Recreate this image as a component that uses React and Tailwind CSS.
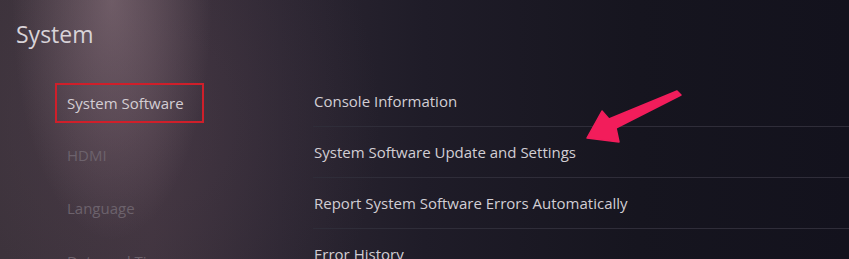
import React from "react";

const sideItems = ["HDMI", "Language", "Date and Time"];

const rows = [
  "Console Information",
  "System Software Update and Settings",
  "Report System Software Errors Automatically",
  "Error History",
];

const Arrow = () => (
  <svg
    className="absolute left-0 top-0 pointer-events-none"
    width="849"
    height="259"
    viewBox="0 0 849 259"
  >
    <polygon
      points="587,138 602,111 609,119 677,91 681,95 616,128 619,142"
      fill="#f21d5b"
      stroke="#f21d5b"
      strokeWidth="1.5"
      strokeLinejoin="round"
    />
  </svg>
);

const App = () => {
  return (
    <div
      className="relative w-[849px] h-[259px] overflow-hidden text-[#d2ced3] bg-[radial-gradient(ellipse_100px_240px_at_112px_0px,rgba(165,138,148,0.45),transparent),radial-gradient(ellipse_260px_300px_at_120px_120px,rgba(95,72,88,0.35),transparent),linear-gradient(90deg,#383038_0%,#3b313b_18%,#2c2632_33%,#1f1c28_50%,#16151f_75%,#13121d_100%)]"
      style={{ fontFamily: '"Open Sans", "Noto Sans", sans-serif' }}
    >
      <h1 className="pl-4 pt-[18px] h-[76px] text-[23px] leading-[32px] text-[#d8d3d8]">
        System
      </h1>

      <div className="flex">
        {/* Left menu */}
        <div className="w-[313px] pl-[55px] flex flex-col">
          <div className="h-[53px] pt-[7px]">
            <div className="w-[149px] h-[40px] border-2 border-[#cf1f2a] pl-[10px] flex items-center text-[15px] text-[#d4ced4]">
              System Software
            </div>
          </div>
          {sideItems.map((item) => (
            <div
              key={item}
              className="h-[53px] pl-3 flex items-center text-[15px] text-[#6c626c]"
            >
              {item}
            </div>
          ))}
        </div>

        {/* Right list */}
        <div className="flex-1 flex flex-col">
          {rows.map((row) => (
            <div
              key={row}
              className="h-[51px] pl-px flex items-center border-b border-[#2f2d39] text-[15px] text-[#d2ced4]"
            >
              {row}
            </div>
          ))}
        </div>
      </div>

      <Arrow />
    </div>
  );
};

export default App;
